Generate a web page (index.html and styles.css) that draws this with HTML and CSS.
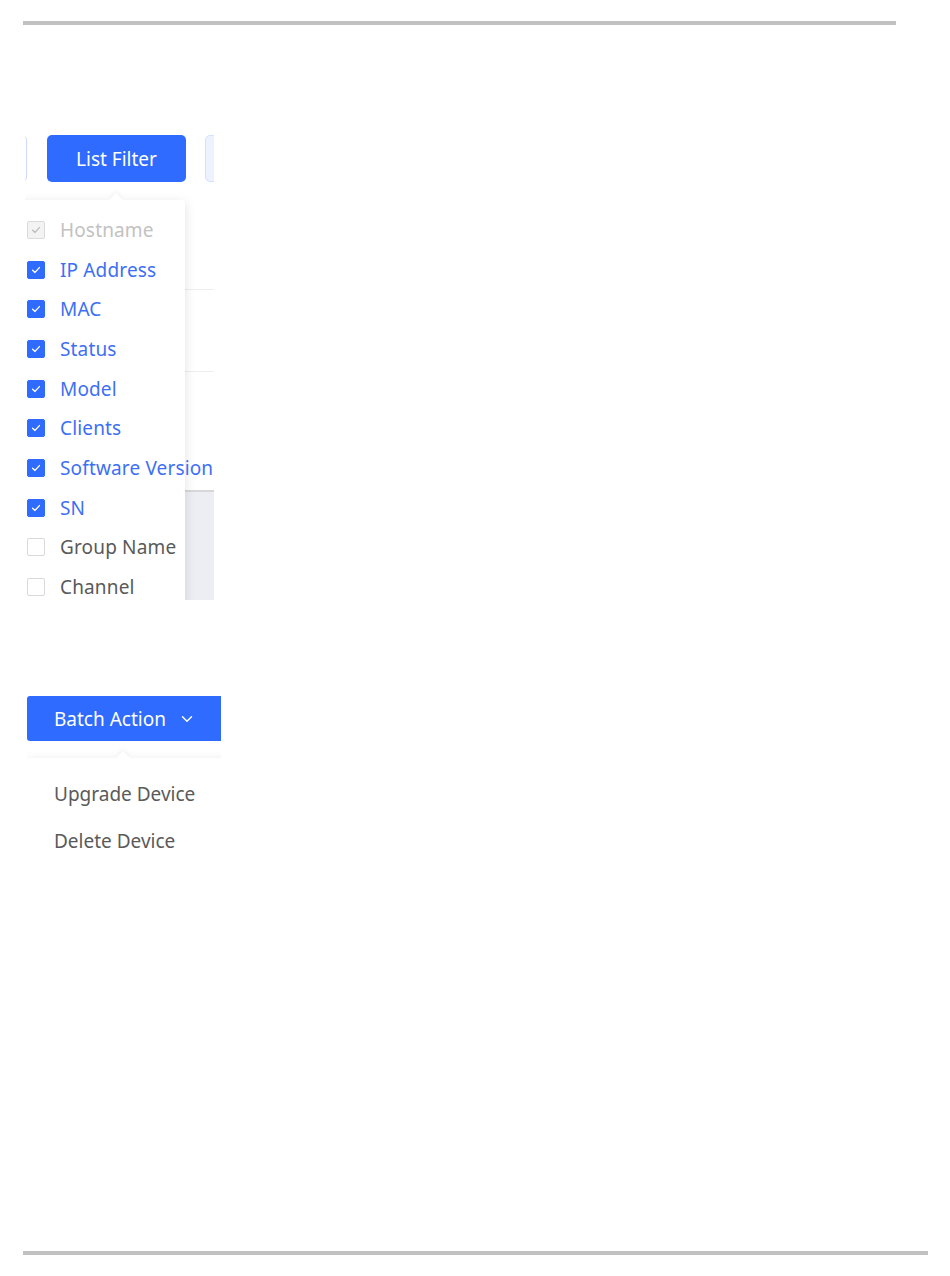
FILE: index.html
```html
<!DOCTYPE html>
<html>
<head>
<meta charset="utf-8">
<link rel="stylesheet" href="styles.css">
</head>
<body>
<div class="page">
  <div class="rule rule-top"></div>

  <div class="shot shot-filter">
    <div class="table-bg">
      <div class="tb-line tb-line-1"></div>
      <div class="tb-line tb-line-2"></div>
      <div class="tb-foot"></div>
    </div>
    <div class="toolbar">
      <div class="btn btn-ghost btn-left"></div>
      <div class="btn btn-primary btn-filter">List Filter</div>
      <div class="btn btn-ghost btn-right"></div>
    </div>
    <div class="popover pop-filter">
      <div class="arrow"></div>
      <div class="opt disabled"><span class="cb cb-disabled"><svg viewBox="0 0 12 12"><path d="M2.6 6.2 L5 8.4 L9.4 3.6"/></svg></span><span class="lbl">Hostname</span></div>
      <div class="opt on"><span class="cb cb-on"><svg viewBox="0 0 12 12"><path d="M2.6 6.2 L5 8.4 L9.4 3.6"/></svg></span><span class="lbl">IP Address</span></div>
      <div class="opt on"><span class="cb cb-on"><svg viewBox="0 0 12 12"><path d="M2.6 6.2 L5 8.4 L9.4 3.6"/></svg></span><span class="lbl">MAC</span></div>
      <div class="opt on"><span class="cb cb-on"><svg viewBox="0 0 12 12"><path d="M2.6 6.2 L5 8.4 L9.4 3.6"/></svg></span><span class="lbl">Status</span></div>
      <div class="opt on"><span class="cb cb-on"><svg viewBox="0 0 12 12"><path d="M2.6 6.2 L5 8.4 L9.4 3.6"/></svg></span><span class="lbl">Model</span></div>
      <div class="opt on"><span class="cb cb-on"><svg viewBox="0 0 12 12"><path d="M2.6 6.2 L5 8.4 L9.4 3.6"/></svg></span><span class="lbl">Clients</span></div>
      <div class="opt on"><span class="cb cb-on"><svg viewBox="0 0 12 12"><path d="M2.6 6.2 L5 8.4 L9.4 3.6"/></svg></span><span class="lbl">Software Version</span></div>
      <div class="opt on"><span class="cb cb-on"><svg viewBox="0 0 12 12"><path d="M2.6 6.2 L5 8.4 L9.4 3.6"/></svg></span><span class="lbl">SN</span></div>
      <div class="opt"><span class="cb"></span><span class="lbl">Group Name</span></div>
      <div class="opt"><span class="cb"></span><span class="lbl">Channel</span></div>
    </div>
  </div>

  <div class="shot shot-batch">
    <div class="btn btn-primary btn-batch">Batch Action
      <svg class="chev" viewBox="0 0 12 8"><path d="M1.5 1.8 L6 6.2 L10.5 1.8"/></svg>
    </div>
    <div class="popover pop-batch">
      <div class="arrow"></div>
      <div class="item">Upgrade Device</div>
      <div class="item">Delete Device</div>
    </div>
  </div>

  <div class="rule rule-bottom"></div>
</div>
</body>
</html>
```

FILE: styles.css
```css
html, body {
  margin: 0;
  padding: 0;
  background: #ffffff;
}

.page {
  width: 950px;
  height: 1276px;
  display: flex;
  flex-direction: column;
  font-family: "Noto Sans", "Liberation Sans", Arial, sans-serif;
}

.rule {
  height: 4px;
  background: #c1c1c1;
}

.rule-top {
  margin-top: 21px;
  margin-left: 23px;
  width: 873px;
}

.rule-bottom {
  margin-top: 381px;
  margin-left: 23px;
  width: 905px;
}

.shot {
  position: relative;
  overflow: hidden;
  background: #ffffff;
}

/* ---------- first screenshot: List Filter ---------- */
.shot-filter {
  margin-top: 108px;
  margin-left: 25px;
  width: 189px;
  height: 467px;
}

.table-bg {
  position: absolute;
  inset: 0;
}

.tb-line {
  position: absolute;
  left: 0;
  right: 0;
  height: 1px;
  background: #eceef2;
}

.tb-line-1 { top: 156px; }
.tb-line-2 { top: 238px; }

.tb-foot {
  position: absolute;
  left: 0;
  right: 0;
  top: 357px;
  bottom: 0;
  background: #eceef3;
  border-top: 2px solid #d6d7da;
}

.toolbar {
  position: relative;
  display: flex;
  gap: 20px;
  margin-top: 2px;
  margin-left: -100px;
}

.btn {
  box-sizing: border-box;
  height: 47px;
  border-radius: 5px;
  display: flex;
  align-items: center;
  justify-content: center;
  font-size: 19px;
  flex-shrink: 0;
}

.btn-ghost {
  width: 102px;
  border: 1.5px solid #cfdaff;
  background: #ffffff;
}

.btn-right {
  margin-left: -1px;
  background: #eef2ff;
  border-color: #d5dfff;
}

.btn-primary {
  background: #2e6bfe;
  color: #ffffff;
}

.btn-filter {
  width: 139px;
}

.popover {
  position: absolute;
  background: #ffffff;
  box-shadow: 0 3px 12px rgba(0, 0, 0, 0.12);
  border-radius: 3px;
}

.arrow {
  position: absolute;
  top: -5px;
  width: 10px;
  height: 10px;
  background: #ffffff;
  transform: rotate(45deg);
  box-shadow: -2px -2px 4px rgba(0, 0, 0, 0.04);
}

.pop-filter {
  top: 67px;
  left: -10px;
  width: 170px;
  height: 440px;
  padding-top: 10px;
  box-sizing: border-box;
}

.pop-filter .arrow {
  left: 96px;
}

.opt {
  height: 39.7px;
  display: flex;
  align-items: center;
  padding-left: 12px;
  font-size: 19px;
  letter-spacing: 0.15px;
  color: #595959;
  white-space: nowrap;
}

.opt.on { color: #3d6ff5; }
.opt.disabled { color: #c2c2c2; }

.cb {
  box-sizing: border-box;
  width: 18px;
  height: 18px;
  border: 1.5px solid #d9d9d9;
  border-radius: 2px;
  background: #ffffff;
  margin-right: 15px;
  flex-shrink: 0;
  display: flex;
  align-items: center;
  justify-content: center;
}

.cb svg {
  width: 12px;
  height: 12px;
  fill: none;
  stroke-width: 1.4;
  stroke-linecap: round;
  stroke-linejoin: round;
}

.cb-on {
  background: #2e6bfe;
  border-color: #2e6bfe;
}

.cb-on svg { stroke: #ffffff; }

.cb-disabled {
  background: #f3f3f3;
  border-color: #dadada;
}

.cb-disabled svg { stroke: #bdbdbd; }

/* ---------- second screenshot: Batch Action ---------- */
.shot-batch {
  margin-top: 95px;
  margin-left: 27px;
  width: 194px;
  height: 175px;
}

.btn-batch {
  margin-top: 1px;
  width: 230px;
  height: 45px;
  justify-content: flex-start;
  padding-left: 27px;
  border-radius: 3px;
}

.chev {
  width: 12px;
  height: 8px;
  margin-left: 15px;
  fill: none;
  stroke: #ffffff;
  stroke-width: 1.5;
  stroke-linecap: round;
  stroke-linejoin: round;
}

.pop-batch {
  top: 63px;
  left: 0;
  width: 240px;
  height: 140px;
  padding-top: 13px;
  box-sizing: border-box;
}

.pop-batch .arrow {
  left: 91px;
}

.item {
  height: 46.7px;
  display: flex;
  align-items: center;
  padding-left: 27px;
  font-size: 19px;
  color: #5a5a5a;
  white-space: nowrap;
}
```
